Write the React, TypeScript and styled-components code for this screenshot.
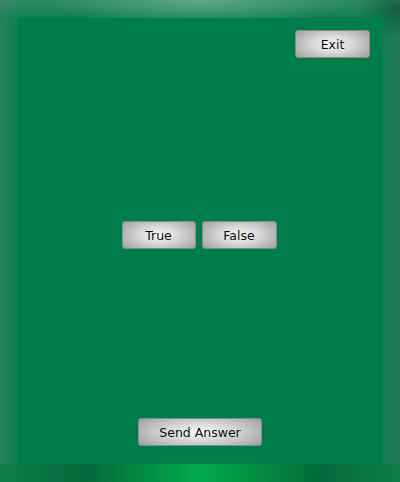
import React from "react";
import styled, { createGlobalStyle } from "styled-components";

const Global = createGlobalStyle`
  html, body { margin: 0; padding: 0; }
  body { font-family: "DejaVu Sans", "Liberation Sans", sans-serif; }
`;

const Backdrop = styled.div`
  width: 400px;
  height: 482px;
  box-sizing: border-box;
  padding: 18px;
  background:
    radial-gradient(ellipse 150px 26px at 200px 0px, rgba(110, 180, 150, 0.7), rgba(110, 180, 150, 0) 100%),
    radial-gradient(ellipse 40px 30px at 398px 8px, rgba(10, 80, 50, 0.7), rgba(10, 80, 50, 0) 100%),
    linear-gradient(to bottom, rgba(60, 140, 105, 0.8) 0px, rgba(60, 140, 105, 0) 18px),
    linear-gradient(to right, #0f7d4a 0%, #056a3b 22%, #00ac4a 50%, #056a3b 80%, #0f7d4a 100%) bottom / 100% 18px no-repeat,
    linear-gradient(to right, #267f5b 0px, #0f8150 18px, #0f8150 382px, #24795a 400px);
`;

const Panel = styled.div`
  height: 446px;
  box-sizing: border-box;
  background: #017d4b;
  display: flex;
  flex-direction: column;
  padding: 12px 12px 18px 18px;
`;

const TopBar = styled.div`
  display: flex;
  justify-content: flex-end;
`;

const Middle = styled.div`
  flex: 1;
  display: flex;
  align-items: center;
  justify-content: center;
  gap: 6px;
  padding-bottom: 6px;
  padding-right: 8px;
`;

const BottomBar = styled.div`
  display: flex;
  justify-content: center;
  padding-right: 6px;
`;

const Button = styled.button<{ $w: number }>`
  width: ${(p) => p.$w}px;
  height: 28px;
  box-sizing: border-box;
  border: 1px solid #8a8a8a;
  border-radius: 3px;
  background: radial-gradient(ellipse 60% 75% at 50% 50%, #f6f6f6 0%, #d8d8d8 45%, #a6a6a6 100%);
  font-family: "DejaVu Sans", "Liberation Sans", sans-serif;
  font-size: 12.5px;
  color: #0e0e0e;
  padding: 0;
  display: flex;
  align-items: center;
  justify-content: center;
  cursor: pointer;
`;

export default function App() {
  return (
    <>
      <Global />
      <Backdrop>
        <Panel>
          <TopBar>
            <Button $w={75}>Exit</Button>
          </TopBar>
          <Middle>
            <Button $w={74}>True</Button>
            <Button $w={75}>False</Button>
          </Middle>
          <BottomBar>
            <Button $w={124}>Send Answer</Button>
          </BottomBar>
        </Panel>
      </Backdrop>
    </>
  );
}
